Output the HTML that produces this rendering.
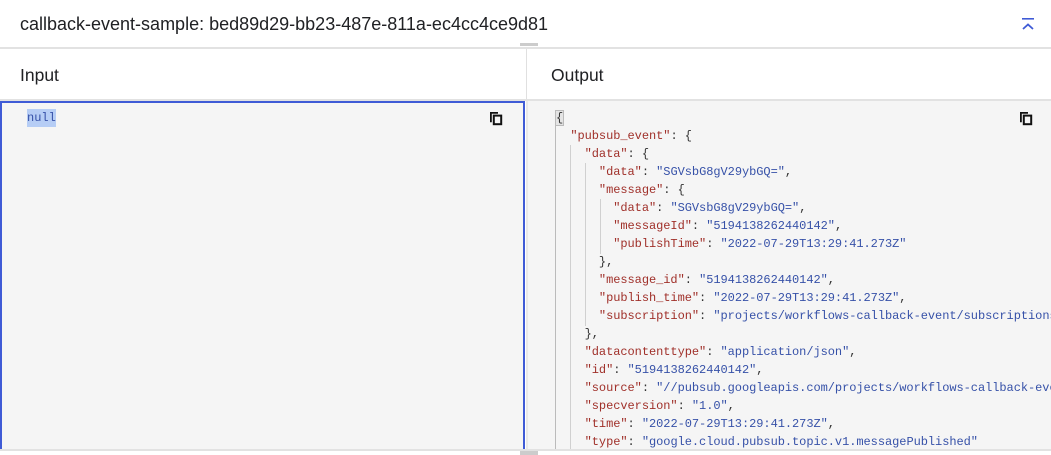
<!DOCTYPE html>
<html><head><style>
*{margin:0;padding:0;box-sizing:border-box}
body{width:1051px;height:455px;overflow:hidden;background:#fff;font-family:"Liberation Sans",sans-serif;position:relative;color:#202124}
.abs{position:absolute}
.code{font-family:"Liberation Mono",monospace;font-size:12px;white-space:pre;line-height:18px}
.k{color:#a0302a}.s{color:#3651a8}.p{color:#333}
.g{position:absolute;width:1px;background:#d0d0d0}
</style></head><body>
<div class="abs" style="left:20px;top:12px;font-size:18px;line-height:24px">callback-event-sample: bed89d29-bb23-487e-811a-ec4cc4ce9d81</div>
<svg class="abs" style="left:1021px;top:17px" width="14" height="14" viewBox="0 0 14 14"><rect x="1" y="1" width="12" height="1.6" fill="#3f5bd6"/><path d="M2 12 L7 7.5 L12 12" stroke="#3f5bd6" stroke-width="1.8" fill="none"/></svg>
<div class="abs" style="left:0;top:47px;width:1051px;height:2px;background:#e2e2e2"></div>
<div class="abs" style="left:520px;top:43px;width:18px;height:3px;background:#ccc"></div>
<div class="abs" style="left:526px;top:49px;width:1px;height:51px;background:#e0e0e0"></div>
<div class="abs" style="left:20px;top:64px;font-size:17.5px;line-height:22px">Input</div>
<div class="abs" style="left:551px;top:64px;font-size:17.5px;line-height:22px">Output</div>
<div class="abs" style="left:0;top:99px;width:1051px;height:2px;background:#e2e2e2"></div>
<div class="abs" style="left:0;top:101px;width:525px;height:354px;background:#f5f5f5;border:2px solid #3f5bd6;border-bottom:none"></div>
<div class="abs" style="left:526px;top:101px;width:2px;height:354px;background:#e8e8e8"></div>
<div class="abs" style="left:528px;top:101px;width:523px;height:354px;background:#f5f5f5"></div>
<div class="abs code" style="left:27px;top:109px;color:#3651a8;background:#b6cdf5">null</div>
<svg class="abs" style="left:489px;top:111px" width="14" height="15" viewBox="0 0 14 15"><path d="M1 1h8v1.8h-6.2v8.5h-1.8z" fill="#111"/><rect x="4.8" y="4.6" width="7.4" height="8.6" fill="none" stroke="#111" stroke-width="2"/></svg>
<svg class="abs" style="left:1019px;top:111px" width="14" height="15" viewBox="0 0 14 15"><path d="M1 1h8v1.8h-6.2v8.5h-1.8z" fill="#111"/><rect x="4.8" y="4.6" width="7.4" height="8.6" fill="none" stroke="#111" stroke-width="2"/></svg>
<div class="g" style="left:555px;top:110px;height:340px;background:#bbb"></div>
<div class="g" style="left:570px;top:145px;height:305px"></div>
<div class="g" style="left:585px;top:163px;height:163px"></div>
<div class="g" style="left:600px;top:199px;height:55px"></div>
<div class="abs code" style="left:556px;top:109px;letter-spacing:-0.05px"><span class="p" style="background:#e4e4e4;outline:1px solid #bbb">{</span>
  <span class="k">"pubsub_event"</span><span class="p">: {</span>
    <span class="k">"data"</span><span class="p">: {</span>
      <span class="k">"data"</span><span class="p">: </span><span class="s">"SGVsbG8gV29ybGQ="</span><span class="p">,</span>
      <span class="k">"message"</span><span class="p">: {</span>
        <span class="k">"data"</span><span class="p">: </span><span class="s">"SGVsbG8gV29ybGQ="</span><span class="p">,</span>
        <span class="k">"messageId"</span><span class="p">: </span><span class="s">"5194138262440142"</span><span class="p">,</span>
        <span class="k">"publishTime"</span><span class="p">: </span><span class="s">"2022-07-29T13:29:41.273Z"</span>
      <span class="p">},</span>
      <span class="k">"message_id"</span><span class="p">: </span><span class="s">"5194138262440142"</span><span class="p">,</span>
      <span class="k">"publish_time"</span><span class="p">: </span><span class="s">"2022-07-29T13:29:41.273Z"</span><span class="p">,</span>
      <span class="k">"subscription"</span><span class="p">: </span><span class="s">"projects/workflows-callback-event/subscriptions/x"</span>
    <span class="p">},</span>
    <span class="k">"datacontenttype"</span><span class="p">: </span><span class="s">"application/json"</span><span class="p">,</span>
    <span class="k">"id"</span><span class="p">: </span><span class="s">"5194138262440142"</span><span class="p">,</span>
    <span class="k">"source"</span><span class="p">: </span><span class="s">"//pubsub.googleapis.com/projects/workflows-callback-event"</span><span class="p">,</span>
    <span class="k">"specversion"</span><span class="p">: </span><span class="s">"1.0"</span><span class="p">,</span>
    <span class="k">"time"</span><span class="p">: </span><span class="s">"2022-07-29T13:29:41.273Z"</span><span class="p">,</span>
    <span class="k">"type"</span><span class="p">: </span><span class="s">"google.cloud.pubsub.topic.v1.messagePublished"</span></div>
<div class="abs" style="left:0;top:449px;width:1051px;height:6px;background:#fff;border-top:2px solid #e2e2e2"></div>
<div class="abs" style="left:520px;top:451px;width:18px;height:4px;background:#ccc"></div>
</body></html>
